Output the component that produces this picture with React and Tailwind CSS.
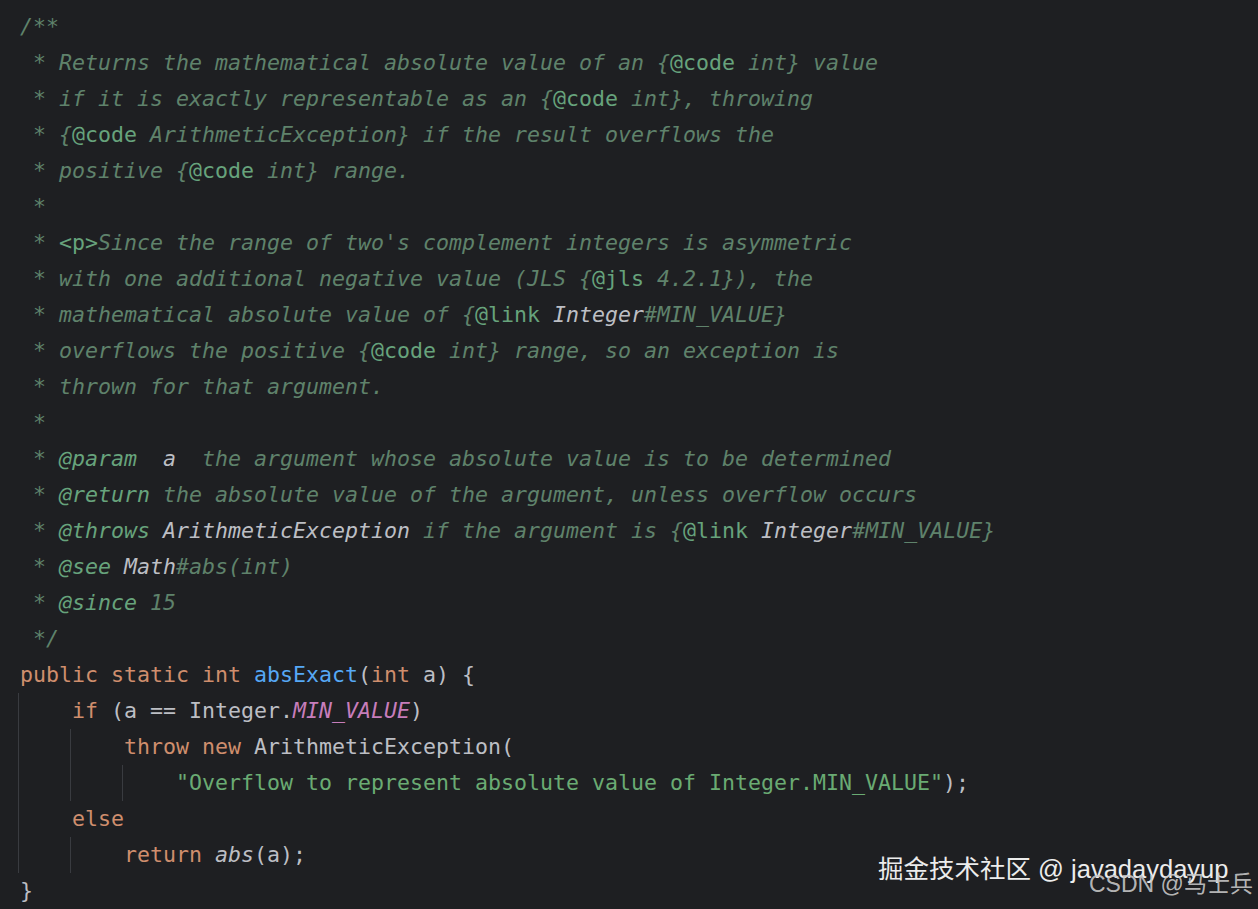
const mono = { fontFamily: '"DejaVu Sans Mono", "Liberation Mono", monospace' };

const styles = {
  c: "italic text-[#5f826b]",
  t: "text-[#67a37c]",
  ti: "italic text-[#67a37c]",
  r: "italic text-[#bcbec4]",
  kw: "text-[#cf8e6d]",
  fn: "text-[#56a8f5]",
  str: "text-[#6aab73]",
  sf: "italic text-[#c77dbb]",
  p: "text-[#bcbec4]",
  ip: "italic text-[#bcbec4]",
};

const lines = [
  { parts: [["c", "/**"]] },
  { parts: [["c", " * Returns the mathematical absolute value of an {"], ["t", "@code"], ["c", " int} value"]] },
  { parts: [["c", " * if it is exactly representable as an {"], ["t", "@code"], ["c", " int}, throwing"]] },
  { parts: [["c", " * {"], ["t", "@code"], ["c", " ArithmeticException} if the result overflows the"]] },
  { parts: [["c", " * positive {"], ["t", "@code"], ["c", " int} range."]] },
  { parts: [["c", " *"]] },
  { parts: [["c", " * "], ["t", "<p>"], ["c", "Since the range of two's complement integers is asymmetric"]] },
  { parts: [["c", " * with one additional negative value (JLS {"], ["t", "@jls"], ["c", " 4.2.1}), the"]] },
  { parts: [["c", " * mathematical absolute value of {"], ["t", "@link"], ["c", " "], ["r", "Integer"], ["c", "#MIN_VALUE}"]] },
  { parts: [["c", " * overflows the positive {"], ["t", "@code"], ["c", " int} range, so an exception is"]] },
  { parts: [["c", " * thrown for that argument."]] },
  { parts: [["c", " *"]] },
  { parts: [["c", " * "], ["ti", "@param"], ["c", "  "], ["r", "a"], ["c", "  the argument whose absolute value is to be determined"]] },
  { parts: [["c", " * "], ["ti", "@return"], ["c", " the absolute value of the argument, unless overflow occurs"]] },
  {
    parts: [
      ["c", " * "], ["ti", "@throws"], ["c", " "], ["r", "ArithmeticException"],
      ["c", " if the argument is {"], ["t", "@link"], ["c", " "], ["r", "Integer"], ["c", "#MIN_VALUE}"],
    ],
  },
  { parts: [["c", " * "], ["ti", "@see"], ["c", " "], ["r", "Math"], ["c", "#abs(int)"]] },
  { parts: [["c", " * "], ["ti", "@since"], ["c", " 15"]] },
  { parts: [["c", " */"]] },
  {
    parts: [
      ["kw", "public static int "], ["fn", "absExact"], ["p", "("], ["kw", "int"], ["p", " a) {"],
    ],
  },
  { guides: 1, parts: [["kw", "if"], ["p", " (a == Integer."], ["sf", "MIN_VALUE"], ["p", ")"]] },
  { guides: 2, parts: [["kw", "throw new"], ["p", " ArithmeticException("]] },
  {
    guides: 3,
    parts: [["str", "\"Overflow to represent absolute value of Integer.MIN_VALUE\""], ["p", ");"]],
  },
  { guides: 1, parts: [["kw", "else"]] },
  { guides: 2, parts: [["kw", "return "], ["ip", "abs"], ["p", "(a);"]] },
  { parts: [["p", "}"]] },
];

const CodeLine = ({ line }) => (
  <div className="flex h-[36px] items-center whitespace-pre">
    {Array.from({ length: line.guides || 0 }).map((_, i) => (
      <span key={i} className="h-full w-[4ch] shrink-0 border-l border-[#393b40]" />
    ))}
    <span className="ml-[2px]">
      {line.parts.map(([k, text], i) => (
        <span key={i} className={styles[k]}>
          {text}
        </span>
      ))}
    </span>
  </div>
);

export default function App() {
  return (
    <div className="relative h-[909px] w-[1258px] overflow-hidden bg-[#1e1f22]">
      <div className="pl-[18px] pt-[9px] text-[21.6px]" style={mono}>
        {lines.map((line, i) => (
          <CodeLine key={i} line={line} />
        ))}
      </div>

      {/* watermarks */}
      <div
        className="absolute left-[878px] top-[852px] whitespace-nowrap text-[25.5px] leading-[34px] text-[#ececec]"
        style={{ fontFamily: '"Liberation Sans", "Noto Sans CJK SC", sans-serif' }}
      >
        掘金技术社区 @ javadaydayup
      </div>
      <div
        className="absolute left-[1089px] top-[869px] whitespace-nowrap text-[23px] leading-[30px] text-[#c8c8c8]/90"
        style={{ fontFamily: '"Liberation Sans", "Noto Sans CJK SC", sans-serif' }}
      >
        CSDN @马士兵
      </div>
    </div>
  );
}
